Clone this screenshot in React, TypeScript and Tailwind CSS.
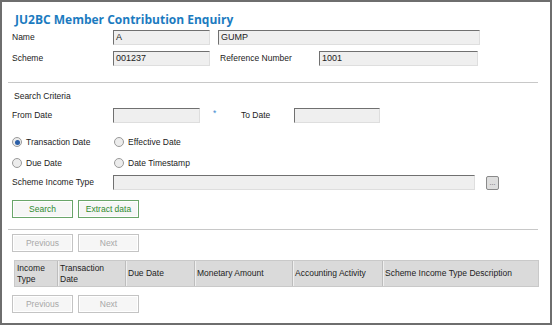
import React from 'react';

const inputCls =
  'h-[15px] bg-[#efefef] border border-t-[#707070] border-l-[#707070] border-r-[#dedede] border-b-[#dedede] px-[2px] text-[9px] leading-[13px] text-[#222]';

function Field({ value = '', className = '' }: { value?: string; className?: string }) {
  return <div className={`${inputCls} ${className}`}>{value}</div>;
}

function Radio({ checked, label }: { checked?: boolean; label: string }) {
  return (
    <div className="flex items-center gap-[4px]">
      <span className="w-[10px] h-[10px] rounded-full border border-[#9a9a9a] bg-[#ececec] flex items-center justify-center">
        {checked && <span className="w-[5px] h-[5px] rounded-full bg-[#2b5fa8]" />}
      </span>
      <span>{label}</span>
    </div>
  );
}

function Btn({ label, active }: { label: string; active?: boolean }) {
  return (
    <div
      className={
        active
          ? 'w-[61px] h-[18px] border border-[#6aa56a] bg-[#f6f6f6] shadow-[inset_0_0_0_1px_#ffffff] flex items-center justify-center text-[#2f8a2f]'
          : 'w-[61px] h-[18px] border border-[#c4c4c4] bg-[#f6f6f6] shadow-[inset_0_0_0_1px_#ffffff] flex items-center justify-center text-[#a8a8a8]'
      }
    >
      {label}
    </div>
  );
}

function Pager() {
  return (
    <div className="flex gap-[5px] pl-[10px]">
      <Btn label="Previous" />
      <Btn label="Next" />
    </div>
  );
}

export default function App() {
  const cols = [
    { w: 'w-[42px]', label: 'Income Type' },
    { w: 'w-[68px]', label: 'Transaction Date' },
    { w: 'w-[69px]', label: 'Due Date' },
    { w: 'w-[98px]', label: 'Monetary Amount' },
    { w: 'w-[90px]', label: 'Accounting Activity' },
    { w: 'flex-1', label: 'Scheme Income Type Description' },
  ];

  return (
    <div className="w-[554px] h-[326px] bg-white font-['Liberation_Sans',Arial,sans-serif] text-[8.5px] text-[#222]">
      <div className="w-[552px] h-[325px] border-2 border-[#6e6e6e] pt-[9px] flex flex-col">
        <h1 className="pl-[13px] h-[18px] font-['Open_Sans',sans-serif] font-bold text-[12px] leading-[18px] text-[#1b7bc0]">
          JU2BC Member Contribution Enquiry
        </h1>

        <div className="mt-[1px] h-[15px] flex items-center pl-[10px]">
          <span className="w-[101px]">Name</span>
          <Field value="A" className="w-[97px]" />
          <Field value="GUMP" className="w-[262px] ml-[8px]" />
        </div>

        <div className="mt-[6px] h-[15px] flex items-center pl-[10px]">
          <span className="w-[101px]">Scheme</span>
          <Field value="001237" className="w-[97px]" />
          <span className="w-[99px] ml-[10px]">Reference Number</span>
          <Field value="1001" className="w-[159px]" />
        </div>

        <div className="mt-[16px] mx-[6px] w-[530px] border-t border-[#c8c8c8]" />

        <div className="mt-[8px] h-[10px] pl-[12px] flex items-center">Search Criteria</div>

        <div className="mt-[7px] h-[14px] flex items-center pl-[10px]">
          <span className="w-[101px]">From Date</span>
          <Field className="w-[87px] h-[14px]" />
          <span className="w-[41px] pl-[13px] text-[#3a8ad0] -mt-[4px]">*</span>
          <span className="w-[53px]">To Date</span>
          <Field className="w-[86px] h-[14px]" />
        </div>

        <div className="mt-[14px] h-[12px] flex items-center pl-[10px]">
          <div className="w-[102px]">
            <Radio checked label="Transaction Date" />
          </div>
          <Radio label="Effective Date" />
        </div>

        <div className="mt-[9px] h-[12px] flex items-center pl-[10px]">
          <div className="w-[102px]">
            <Radio label="Due Date" />
          </div>
          <Radio label="Date Timestamp" />
        </div>

        <div className="mt-[6px] h-[15px] flex items-center pl-[10px]">
          <span className="w-[101px]">Scheme Income Type</span>
          <Field className="w-[362px] h-[14px]" />
          <div className="ml-[11px] w-[13px] h-[14px] rounded-[2px] border border-[#8a8a8a] bg-[#dedede] flex items-end justify-center pb-[3px] text-[7px] leading-none text-[#555]">
            ...
          </div>
        </div>

        <div className="mt-[10px] flex gap-[5px] pl-[10px]">
          <Btn label="Search" active />
          <Btn label="Extract data" active />
        </div>

        <div className="mt-[11px] mx-[6px] w-[530px] border-t border-[#c8c8c8]" />

        <div className="mt-[4px]">
          <Pager />
        </div>

        <div className="mt-[8px] ml-[12px] w-[525px] h-[27px] flex bg-[#dadada] border border-[#c9c9c9]">
          {cols.map((c, i) => (
            <div
              key={i}
              className={`${c.w} h-full flex items-center px-[2px] leading-[11px] ${i > 0 ? 'border-l border-l-[#bdbdbd] shadow-[inset_1px_0_0_#efefef]' : ''}`}
            >
              {c.label}
            </div>
          ))}
        </div>

        <div className="mt-[8px]">
          <Pager />
        </div>
      </div>
    </div>
  );
}
